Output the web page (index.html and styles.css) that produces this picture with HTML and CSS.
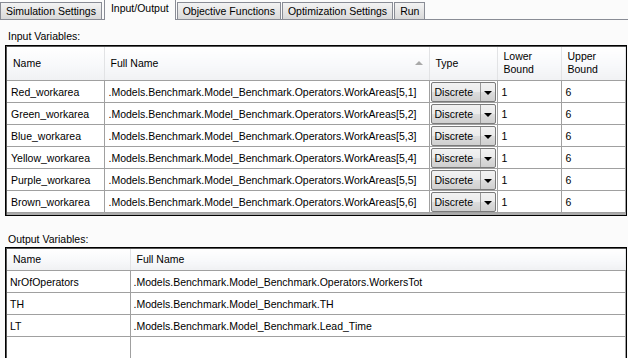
FILE: index.html
```html
<!DOCTYPE html>
<html lang="en">
<head>
    <meta charset="UTF-8">
    <title>Input/Output</title>
    <link rel="stylesheet" href="styles.css">
</head>
<body>
    <div class="tabs">
        <div class="tab">Simulation Settings</div>
        <div class="tab active">Input/Output</div>
        <div class="tab">Objective Functions</div>
        <div class="tab">Optimization Settings</div>
        <div class="tab">Run</div>
    </div>

    <div class="page">
        <div class="caption">Input Variables:</div>
        <div class="grid grid-in">
            <table>
                <colgroup>
                    <col class="c-name">
                    <col class="c-full">
                    <col class="c-type">
                    <col class="c-low">
                    <col>
                </colgroup>
                <thead>
                    <tr class="head-tall">
                        <th>Name</th>
                        <th>Full Name <span class="sort"></span></th>
                        <th>Type</th>
                        <th class="two">Lower<br>Bound</th>
                        <th class="two">Upper<br>Bound</th>
                    </tr>
                </thead>
                <tbody>
                    <tr><td>Red_workarea</td><td>.Models.Benchmark.Model_Benchmark.Operators.WorkAreas[5,1]</td><td class="cb"><div class="combo"><span>Discrete</span><b></b></div></td><td>1</td><td>6</td></tr>
                    <tr><td>Green_workarea</td><td>.Models.Benchmark.Model_Benchmark.Operators.WorkAreas[5,2]</td><td class="cb"><div class="combo"><span>Discrete</span><b></b></div></td><td>1</td><td>6</td></tr>
                    <tr><td>Blue_workarea</td><td>.Models.Benchmark.Model_Benchmark.Operators.WorkAreas[5,3]</td><td class="cb"><div class="combo"><span>Discrete</span><b></b></div></td><td>1</td><td>6</td></tr>
                    <tr><td>Yellow_workarea</td><td>.Models.Benchmark.Model_Benchmark.Operators.WorkAreas[5,4]</td><td class="cb"><div class="combo"><span>Discrete</span><b></b></div></td><td>1</td><td>6</td></tr>
                    <tr><td>Purple_workarea</td><td>.Models.Benchmark.Model_Benchmark.Operators.WorkAreas[5,5]</td><td class="cb"><div class="combo"><span>Discrete</span><b></b></div></td><td>1</td><td>6</td></tr>
                    <tr><td>Brown_workarea</td><td>.Models.Benchmark.Model_Benchmark.Operators.WorkAreas[5,6]</td><td class="cb"><div class="combo"><span>Discrete</span><b></b></div></td><td>1</td><td>6</td></tr>
                </tbody>
            </table>
            <div class="filler"></div>
        </div>

        <div class="caption caption-out">Output Variables:</div>
        <div class="grid grid-out">
            <table>
                <colgroup>
                    <col class="c-oname">
                    <col>
                </colgroup>
                <thead>
                    <tr><th>Name</th><th>Full Name</th></tr>
                </thead>
                <tbody>
                    <tr><td>NrOfOperators</td><td>.Models.Benchmark.Model_Benchmark.Operators.WorkersTot</td></tr>
                    <tr><td>TH</td><td>.Models.Benchmark.Model_Benchmark.TH</td></tr>
                    <tr><td>LT</td><td>.Models.Benchmark.Model_Benchmark.Lead_Time</td></tr>
                    <tr><td></td><td></td></tr>
                </tbody>
            </table>
        </div>
    </div>
</body>
</html>
```

FILE: styles.css
```css
body {
    margin: 0;
    background-color: #fbfbfb;
    font-family: "Liberation Sans", Arial, sans-serif;
    font-size: 10.5px;
    color: #000;
    overflow: hidden;
    height: 358px;
}

/* tab strip */

.tabs {
    display: flex;
    align-items: flex-end;
    height: 19px;
    border-bottom: 1px solid #898c95;
}

.tab {
    height: 16px;
    line-height: 16px;
    padding: 0 5px;
    margin-right: 1px;
    border: 1px solid #898c95;
    border-bottom: none;
    background: linear-gradient(#f3f3f3, #e6e6e6 50%, #d9d9d9);
}

.tab.active {
    height: 20px;
    line-height: 17px;
    padding: 0 6px;
    margin: 0 1px -1px 1px;
    background: #fbfbfb;
}

/* page content */

.page {
    padding: 0 0 0 5px;
}

.caption {
    padding: 10px 0 0 3px;
    height: 15px;
}

.caption-out {
    padding-top: 17px;
    height: 14px;
}

.grid {
    border: 1px solid #000;
    box-shadow: inset 1px 1px 0 #555;
    background-color: #ababab;
    margin-right: 1px;
    padding: 1px 0 0 1px;
}

table {
    width: 100%;
    border-collapse: collapse;
    table-layout: fixed;
    background-color: #fff;
}

.c-name { width: 97px; }
.c-full { width: 325px; }
.c-type { width: 68px; }
.c-low { width: 64px; }
.c-oname { width: 123px; }

th {
    font-weight: normal;
    text-align: left;
    padding: 0 0 0 6px;
    height: 21px;
    background: linear-gradient(#ffffff, #f7f8fa 60%, #f0f1f3);
    border-right: 1px solid #e2e3e5;
    border-bottom: 1px solid #a0a0a0;
    position: relative;
    line-height: 13px;
}

.head-tall th {
    height: 32px;
}

th.two {
    padding-bottom: 1px;
}

.sort {
    position: absolute;
    right: 6px;
    top: 14px;
    border-left: 4px solid transparent;
    border-right: 4px solid transparent;
    border-bottom: 4px solid #a9a9a9;
}

td {
    height: 21px;
    padding: 0 0 0 4px;
    border-right: 1px solid #a0a0a0;
    border-bottom: 1px solid #a0a0a0;
    white-space: nowrap;
    overflow: hidden;
}

.grid-out td {
    padding-left: 3px;
}

td.cb {
    padding: 0 1px;
}

.combo {
    display: flex;
    height: 20px;
    border: 1px solid #7a7a7a;
    border-radius: 2px;
    background: linear-gradient(#f2f2f2, #ebebeb 50%, #dddddd 51%, #cfcfcf);
    box-sizing: border-box;
}

.combo span {
    flex: 1;
    line-height: 18px;
    padding-left: 3px;
}

.combo b {
    width: 14px;
    border-left: 1px solid #9a9a9a;
    position: relative;
}

.combo b::after {
    content: '';
    position: absolute;
    left: 3px;
    top: 8px;
    border-left: 4px solid transparent;
    border-right: 4px solid transparent;
    border-top: 4px solid #000;
}

.filler {
    height: 2px;
}

.grid-out {
    height: 200px;
}
```
